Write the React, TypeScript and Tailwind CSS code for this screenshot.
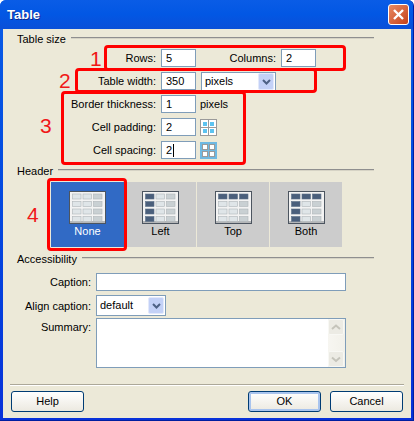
const FONT = "font-['Liberation_Sans','Noto_Sans',sans-serif]";

function Legend({ text }: { text: string }) {
  return (
    <div className="flex items-center h-[14px] ml-[14px] mr-[37px] gap-[5px]">
      <span className="text-[11px] leading-[14px] text-black whitespace-nowrap">{text}</span>
      <div className="flex-1 h-[2px] mb-[2px] bg-[#8f8f8f] border-b border-[#d6d3c5]" />
    </div>
  );
}

function Label({ children, wide = true }: { children: React.ReactNode; wide?: boolean }) {
  return (
    <span className={`text-[11px] leading-[18px] text-black text-right whitespace-nowrap pr-[5px] shrink-0 ${wide ? "w-[158px]" : "w-[93px]"}`}>
      {children}
    </span>
  );
}

function Input({ value, cls = "w-[35px]", caret }: { value: string; cls?: string; caret?: boolean }) {
  return (
    <div className={`h-[18px] bg-white border border-[#7f9db9] flex items-center pl-[4px] text-[11px] text-black ${cls}`}>
      {value}
      {caret && <span className="w-px h-[13px] bg-black ml-px" />}
    </div>
  );
}

function Chevron() {
  return (
    <div className="w-[16px] h-[17px] bg-[#c3d1f7] border border-[#e3e9fb] rounded-[2px] flex items-center justify-center">
      <svg width="9" height="6" viewBox="0 0 9 6"><path d="M1 1 L4.5 4.5 L8 1" fill="none" stroke="#4d6185" strokeWidth="2" /></svg>
    </div>
  );
}

function Select({ value, cls, h = "h-[19px]" }: { value: string; cls: string; h?: string }) {
  return (
    <div className={`bg-white border border-[#7f9db9] flex items-center justify-between pl-[3px] pr-px text-[11px] text-black ${cls} ${h}`}>
      {value}
      <Chevron />
    </div>
  );
}

function SpacingIcon({ active }: { active?: boolean }) {
  const slots = [2, 9];
  return (
    <svg width="17" height="17" viewBox="0 0 17 17" className="ml-[4px] shrink-0">
      {active ? (
        <>
          <rect x="0" y="0" width="17" height="17" fill="#6fb9e2" />
          {slots.map((x) => slots.map((y) => (
            <rect key={`${x}${y}`} x={x + 0.5} y={y + 0.5} width="5" height="5" fill="#ffffff" stroke="#9a9a9a" />
          )))}
        </>
      ) : (
        <>
          <rect x="0.5" y="0.5" width="16" height="16" fill="#ffffff" stroke="#9a9a9a" />
          <path d="M8.5 1 V16 M1 8.5 H16" stroke="#9a9a9a" />
          {slots.map((x) => slots.map((y) => (
            <rect key={`${x}${y}`} x={x + 1} y={y + 1} width="4" height="4" fill="#5cc3f0" />
          )))}
        </>
      )}
    </svg>
  );
}

function TableIcon({ dark }: { dark: (r: number, c: number) => boolean }) {
  const cells = [];
  for (let r = 0; r < 4; r++) {
    for (let c = 0; c < 3; c++) {
      const d = dark(r, c);
      cells.push(
        <rect key={`${r}${c}`} x={3.5 + c * 10.5} y={3 + r * 7.5} width={8.5} height={5}
          fill={d ? "#4a5f7c" : c === 2 ? "#c9d0d3" : "#dfe5e8"} stroke={d ? "#5d7088" : "#aeb5b8"} strokeWidth="0.6" />
      );
    }
  }
  return (
    <svg width="37" height="33" viewBox="0 0 37 33" className="shrink-0">
      <rect x="0.5" y="0.5" width="36" height="32" fill="#f3f3f3" stroke="#4c5560" />
      <rect x="1" y="30" width="35" height="2" fill="#b4b6b8" />
      {cells}
    </svg>
  );
}

function Tile({ label, selected, dark, cls }: { label: string; selected?: boolean; dark: (r: number, c: number) => boolean; cls: string }) {
  return (
    <div className={`h-[65px] flex flex-col items-center pt-[9px] ${cls} ${selected ? "bg-[#316ac5] text-white" : "bg-[#cccccc] text-black"}`}>
      <TableIcon dark={dark} />
      <span className="text-[11px] leading-[14px]">{label}</span>
    </div>
  );
}

function Button({ label, def }: { label: string; def?: boolean }) {
  return (
    <div className={`w-[73px] h-[21px] rounded-[3px] border border-[#003c74] flex items-center justify-center text-[11px] text-black bg-gradient-to-b from-white to-[#ece9e0] ${def ? "shadow-[inset_0_0_0_2px_#a9c4ee]" : ""}`}>
      {label}
    </div>
  );
}

function RedBox({ cls }: { cls: string }) {
  return <div className={`absolute border-[3px] border-[#ff0000] rounded-[4px] pointer-events-none ${cls}`} />;
}

function RedNum({ n, cls }: { n: string; cls: string }) {
  return <span className={`absolute text-[#f01818] text-[21px] leading-[21px] ${cls}`}>{n}</span>;
}

export default function App() {
  return (
    <div className={`relative w-[414px] h-[421px] overflow-hidden rounded-t-[6px] bg-gradient-to-b from-[#0a5ce6] to-[#0831d9] border-r border-b border-[#001ea0] flex flex-col ${FONT}`}>
      <div className="h-[29px] shrink-0 flex items-center justify-between pl-[7px] pr-[4px] bg-gradient-to-b from-[#0a5ce6] via-[#0257e4] to-[#0a4fd8]">
        <span className="text-white font-bold text-[13px] [text-shadow:1px_1px_0_#0f2a8c]">Table</span>
        <div className="w-[21px] h-[21px] rounded-[3px] border border-white bg-gradient-to-br from-[#e88a62] to-[#c43f16] flex items-center justify-center">
          <svg width="13" height="13" viewBox="0 0 13 13"><path d="M2 2 L11 11 M11 2 L2 11" stroke="white" strokeWidth="2.4" /></svg>
        </div>
      </div>

      <div className="flex-1 ml-[3px] mr-[2px] mb-[2px] bg-[#ece9d8] pt-[3px] flex flex-col">
        <Legend text="Table size" />
        <div className="flex items-center mt-[3px] h-[18px]">
          <Label>Rows:</Label>
          <Input value="5" />
          <span className="text-[11px] ml-auto pr-[5px] text-black">Columns:</span>
          <Input value="2" />
          <div className="w-[95px]" />
        </div>
        <div className="flex items-start mt-[5px] h-[18px]">
          <Label>Table width:</Label>
          <Input value="350" />
          <Select value="pixels" cls="w-[75px] ml-[5px]" />
        </div>
        <div className="flex items-center mt-[5px] h-[18px]">
          <Label>Border thickness:</Label>
          <Input value="1" />
          <span className="text-[11px] ml-[4px] text-black">pixels</span>
        </div>
        <div className="flex items-center mt-[5px] h-[18px]">
          <Label>Cell padding:</Label>
          <Input value="2" />
          <SpacingIcon />
        </div>
        <div className="flex items-center mt-[5px] h-[18px]">
          <Label>Cell spacing:</Label>
          <Input value="2" caret />
          <SpacingIcon active />
        </div>

        <div className="mt-[5px]"><Legend text="Header" /></div>
        <div className="flex mt-[4px] ml-[48px] gap-px">
          <Tile label="None" selected cls="w-[73px]" dark={() => false} />
          <Tile label="Left" cls="w-[71px]" dark={(r, c) => c === 0} />
          <Tile label="Top" cls="w-[72px]" dark={(r) => r === 0} />
          <Tile label="Both" cls="w-[72px]" dark={(r, c) => r === 0 || c === 0} />
        </div>

        <div className="mt-[5px]"><Legend text="Accessibility" /></div>
        <div className="flex items-center mt-[7px] h-[18px]">
          <Label wide={false}>Caption:</Label>
          <Input value="" cls="w-[250px]" />
        </div>
        <div className="flex items-center mt-[4px] h-[21px]">
          <Label wide={false}>Align caption:</Label>
          <Select value="default" cls="w-[70px]" h="h-[21px]" />
        </div>
        <div className="flex items-start mt-[2px] h-[50px]">
          <Label wide={false}>Summary:</Label>
          <div className="w-[250px] h-[50px] bg-white border border-[#7f9db9] flex justify-end">
            <div className="w-[17px] h-full flex flex-col justify-between bg-gradient-to-r from-[#f7f6f1] to-[#f2f1ea]">
              {["M1 5 L5 1.5 L9 5", "M1 1.5 L5 5 L9 1.5"].map((d) => (
                <div key={d} className="w-[16px] h-[16px] rounded-[2px] bg-[#ecebe4] border border-[#f8f8f4] flex items-center justify-center">
                  <svg width="10" height="7" viewBox="0 0 10 7"><path d={d} fill="none" stroke="#c5c4bb" strokeWidth="2" /></svg>
                </div>
              ))}
            </div>
          </div>
        </div>

        <div className="mt-[16px] mx-[7px] h-[2px] bg-[#aca899] border-b border-white" />
        <div className="flex mt-[5px] ml-[8px] mr-[8px]">
          <Button label="Help" />
          <div className="ml-auto flex gap-[9px]">
            <Button label="OK" def />
            <Button label="Cancel" />
          </div>
        </div>
      </div>

      <RedBox cls="left-[104px] top-[45px] w-[242px] h-[26px]" />
      <RedBox cls="left-[75px] top-[68px] w-[242px] h-[25px]" />
      <RedBox cls="left-[61px] top-[91px] w-[185px] h-[74px]" />
      <RedBox cls="left-[47px] top-[178px] w-[80px] h-[73px]" />
      <RedNum n="1" cls="left-[90px] top-[48px]" />
      <RedNum n="2" cls="left-[59px] top-[70px]" />
      <RedNum n="3" cls="left-[40px] top-[115px]" />
      <RedNum n="4" cls="left-[27px] top-[204px]" />
    </div>
  );
}
